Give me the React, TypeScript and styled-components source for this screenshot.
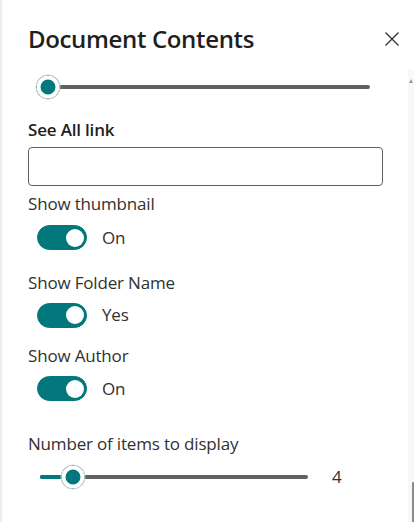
import React from 'react';
import styled, { createGlobalStyle } from 'styled-components';

const teal = '#03787c';
const ink = '#323130';

const GlobalStyle = createGlobalStyle`
  html, body {
    margin: 0;
    padding: 0;
    background: #fff;
  }
  body {
    font-family: 'Open Sans', 'Noto Sans', sans-serif;
    color: ${ink};
  }
`;

const Panel = styled.aside`
  width: 414px;
  height: 522px;
  box-sizing: border-box;
  border-left: 2px solid #ececec;
  display: flex;
  flex-direction: column;
  overflow: hidden;
`;

const Header = styled.header`
  display: flex;
  align-items: center;
  padding: 23px 15px 0 26px;
  flex: 0 0 auto;
`;

const Title = styled.h2`
  margin: 0;
  font-size: 24px;
  line-height: 32px;
  font-weight: 600;
  letter-spacing: -0.35px;
  color: #201f1e;
`;

const CloseButton = styled.button`
  margin-left: auto;
  width: 14px;
  height: 14px;
  padding: 0;
  border: none;
  background: none;
  display: flex;
  color: ${ink};
`;

const Body = styled.div`
  display: flex;
  flex: 1 1 auto;
  min-height: 0;
`;

const Content = styled.div`
  flex: 1 1 auto;
  padding: 19px 0 0 26px;
  display: flex;
  flex-direction: column;
`;

const ScrollTrack = styled.div`
  width: 6px;
  margin-top: 15px;
  background: #f8f8f8;
  display: flex;
  flex-direction: column;
  align-items: flex-end;
  justify-content: space-between;
`;

const ScrollArrow = styled.div`
  margin: 9px 1px 0 0;
  width: 0;
  height: 0;
  border-left: 2px solid transparent;
  border-right: 2px solid transparent;
  border-bottom: 4px solid #9a9a9a;
`;

const ScrollThumb = styled.div`
  width: 2px;
  height: 40px;
  background: #8a8a8a;
  border-radius: 1px 1px 0 0;
`;

const Field = styled.div<{ $top: number }>`
  margin-top: ${(p) => p.$top}px;
  display: flex;
  flex-direction: column;
`;

const Label = styled.label<{ $bold?: boolean; $gap: number }>`
  font-size: 17px;
  line-height: 24px;
  letter-spacing: -0.18px;
  font-weight: ${(p) => (p.$bold ? 600 : 400)};
  color: ${(p) => (p.$bold ? '#201f1e' : ink)};
  margin-bottom: ${(p) => p.$gap}px;
`;

const TextInput = styled.input`
  box-sizing: border-box;
  width: 355px;
  height: 39px;
  border: 1px solid #616161;
  border-radius: 4px;
  padding: 0 10px;
  font: inherit;
  font-size: 17px;
  outline: none;
`;

const ToggleRow = styled.div`
  display: flex;
  align-items: center;
  gap: 15px;
  margin-left: 9px;
  height: 25px;
`;

const ToggleTrack = styled.span<{ $on: boolean }>`
  width: 50px;
  height: 25px;
  box-sizing: border-box;
  border-radius: 13px;
  background: ${(p) => (p.$on ? teal : '#fff')};
  border: 1px solid ${(p) => (p.$on ? teal : '#616161')};
  display: flex;
  align-items: center;
  justify-content: ${(p) => (p.$on ? 'flex-end' : 'flex-start')};
  padding: 0 2.5px;
`;

const ToggleKnob = styled.span`
  width: 18px;
  height: 18px;
  border-radius: 50%;
  background: #fff;
`;

const ToggleText = styled.span`
  font-size: 17px;
  line-height: 24px;
  letter-spacing: -0.18px;
  color: ${ink};
`;

const SliderRow = styled.div<{ $indent: number }>`
  display: flex;
  align-items: center;
  height: 25px;
  padding-left: ${(p) => p.$indent}px;
`;

const Track = styled.div<{ $width: number }>`
  position: relative;
  width: ${(p) => p.$width}px;
  height: 4px;
  border-radius: 2px;
  background: #616161;
`;

const Fill = styled.div`
  height: 100%;
  border-radius: 2px;
  background: ${teal};
`;

const Thumb = styled.span`
  position: absolute;
  top: 50%;
  width: 25px;
  height: 25px;
  box-sizing: border-box;
  border-radius: 50%;
  border: 1px solid #d4d4d4;
  background: ${teal};
  box-shadow: inset 0 0 0 4px #fff;
  transform: translate(-50%, -50%);
`;

const SliderValue = styled.span`
  margin-left: 24px;
  font-size: 17px;
  line-height: 24px;
  color: ${ink};
`;

type SliderProps = {
  indent: number;
  width: number;
  value: number;
  label?: string;
};

function Slider({ indent, width, value, label }: SliderProps) {
  const pct = `${value * 100}%`;
  return (
    <SliderRow $indent={indent}>
      <Track $width={width}>
        <Fill style={{ width: pct }} />
        <Thumb style={{ left: pct }} />
      </Track>
      {label && <SliderValue>{label}</SliderValue>}
    </SliderRow>
  );
}

function Toggle({ on, text }: { on: boolean; text: string }) {
  return (
    <ToggleRow>
      <ToggleTrack $on={on}>
        <ToggleKnob />
      </ToggleTrack>
      <ToggleText>{text}</ToggleText>
    </ToggleRow>
  );
}

export default function App() {
  return (
    <>
      <GlobalStyle />
      <Panel>
        <Header>
          <Title>Document Contents</Title>
          <CloseButton aria-label='Close'>
            <svg width='14' height='14' viewBox='0 0 14 14'>
              <path d='M0.5 0.5 L13.5 13.5 M13.5 0.5 L0.5 13.5' stroke='currentColor' strokeWidth='1.3' fill='none' />
            </svg>
          </CloseButton>
        </Header>
        <Body>
          <Content>
            <Slider indent={20} width={322} value={0} />

            <Field $top={19}>
              <Label $bold $gap={5}>See All link</Label>
              <TextInput type='text' />
            </Field>

            <Field $top={6}>
              <Label $gap={9}>Show thumbnail</Label>
              <Toggle on text='On' />
            </Field>

            <Field $top={20.5}>
              <Label $gap={8}>Show Folder Name</Label>
              <Toggle on text='Yes' />
            </Field>

            <Field $top={16}>
              <Label $gap={8.5}>Show Author</Label>
              <Toggle on text='On' />
            </Field>

            <Field $top={31}>
              <Label $gap={8.5}>Number of items to display</Label>
              <Slider indent={12} width={268} value={0.122} label='4' />
            </Field>
          </Content>
          <ScrollTrack>
            <ScrollArrow />
            <ScrollThumb />
          </ScrollTrack>
        </Body>
      </Panel>
    </>
  );
}
